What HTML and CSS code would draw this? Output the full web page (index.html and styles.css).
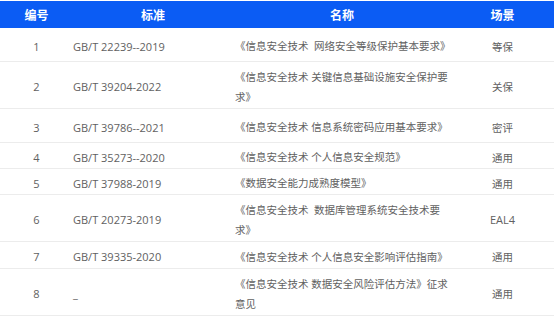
FILE: index.html
```html
<!DOCTYPE html>
<html lang="zh-CN">
<head>
<meta charset="utf-8">
<title>标准列表</title>
<link rel="stylesheet" href="styles.css">
</head>
<body>
<div class="table">
  <div class="row head">
    <div class="c num">编号</div>
    <div class="c std-h">标准</div>
    <div class="c name-h">名称</div>
    <div class="c scene">场景</div>
  </div>
  <div class="row h34">
    <div class="c num">1</div>
    <div class="c std">GB/T 22239--2019</div>
    <div class="c name">《信息安全技术&nbsp; 网络安全等级保护基本要求》</div>
    <div class="c scene">等保</div>
  </div>
  <div class="row h47">
    <div class="c num">2</div>
    <div class="c std">GB/T 39204-2022</div>
    <div class="c name">《信息安全技术 关键信息基础设施安全保护要求》</div>
    <div class="c scene">关保</div>
  </div>
  <div class="row h34">
    <div class="c num">3</div>
    <div class="c std">GB/T 39786--2021</div>
    <div class="c name">《信息安全技术 信息系统密码应用基本要求》</div>
    <div class="c scene">密评</div>
  </div>
  <div class="row h26">
    <div class="c num">4</div>
    <div class="c std">GB/T 35273--2020</div>
    <div class="c name">《信息安全技术 个人信息安全规范》</div>
    <div class="c scene">通用</div>
  </div>
  <div class="row h26">
    <div class="c num">5</div>
    <div class="c std">GB/T 37988-2019</div>
    <div class="c name">《数据安全能力成熟度模型》</div>
    <div class="c scene">通用</div>
  </div>
  <div class="row h47">
    <div class="c num">6</div>
    <div class="c std">GB/T 20273-2019</div>
    <div class="c name">《信息安全技术&nbsp; 数据库管理系统安全技术要求》</div>
    <div class="c scene latin">EAL4</div>
  </div>
  <div class="row h27">
    <div class="c num">7</div>
    <div class="c std">GB/T 39335-2020</div>
    <div class="c name">《信息安全技术 个人信息安全影响评估指南》</div>
    <div class="c scene">通用</div>
  </div>
  <div class="row h47">
    <div class="c num">8</div>
    <div class="c std">_</div>
    <div class="c name">《信息安全技术 数据安全风险评估方法》征求意见</div>
    <div class="c scene">通用</div>
  </div>
</div>
</body>
</html>
```

FILE: styles.css
```css
html, body {
  margin: 0;
  padding: 0;
  background: #ffffff;
}

body {
  padding-top: 1px;
  font-family: "Open Sans", "Noto Sans CJK SC", sans-serif;
  color: #616161;
}

.table {
  width: 554px;
}

.row {
  display: grid;
  grid-template-columns: 73px 162px 216px 1fr;
  align-items: center;
  box-sizing: border-box;
  border-bottom: 1px solid #ececec;
  padding-top: 3px;
}

.row.head {
  height: 27px;
  background: #0b5cf4;
  border-bottom: none;
  padding-top: 0;
  color: #ffffff;
  font-family: "Noto Sans CJK SC", sans-serif;
  font-weight: 700;
  font-size: 12px;
}

.h34 { height: 34px; }
.h47 { height: 47px; }
.h26 { height: 26px; }
.h27 { height: 27px; }

.c {
  min-width: 0;
}

.num {
  text-align: center;
  font-size: 11px;
}

.head .num {
  font-size: 12px;
}

.std-h {
  text-align: center;
  padding-right: 2px;
}

.name-h {
  text-align: center;
  padding-right: 2px;
}

.std {
  font-size: 11px;
}

.name {
  font-family: "Open Sans", "Noto Sans CJK SC", sans-serif;
  font-size: 10.5px;
  line-height: 20px;
}

.scene {
  text-align: center;
  font-size: 10.5px;
}

.head .scene {
  font-size: 12px;
}

.scene.latin {
  font-size: 11px;
}
```
